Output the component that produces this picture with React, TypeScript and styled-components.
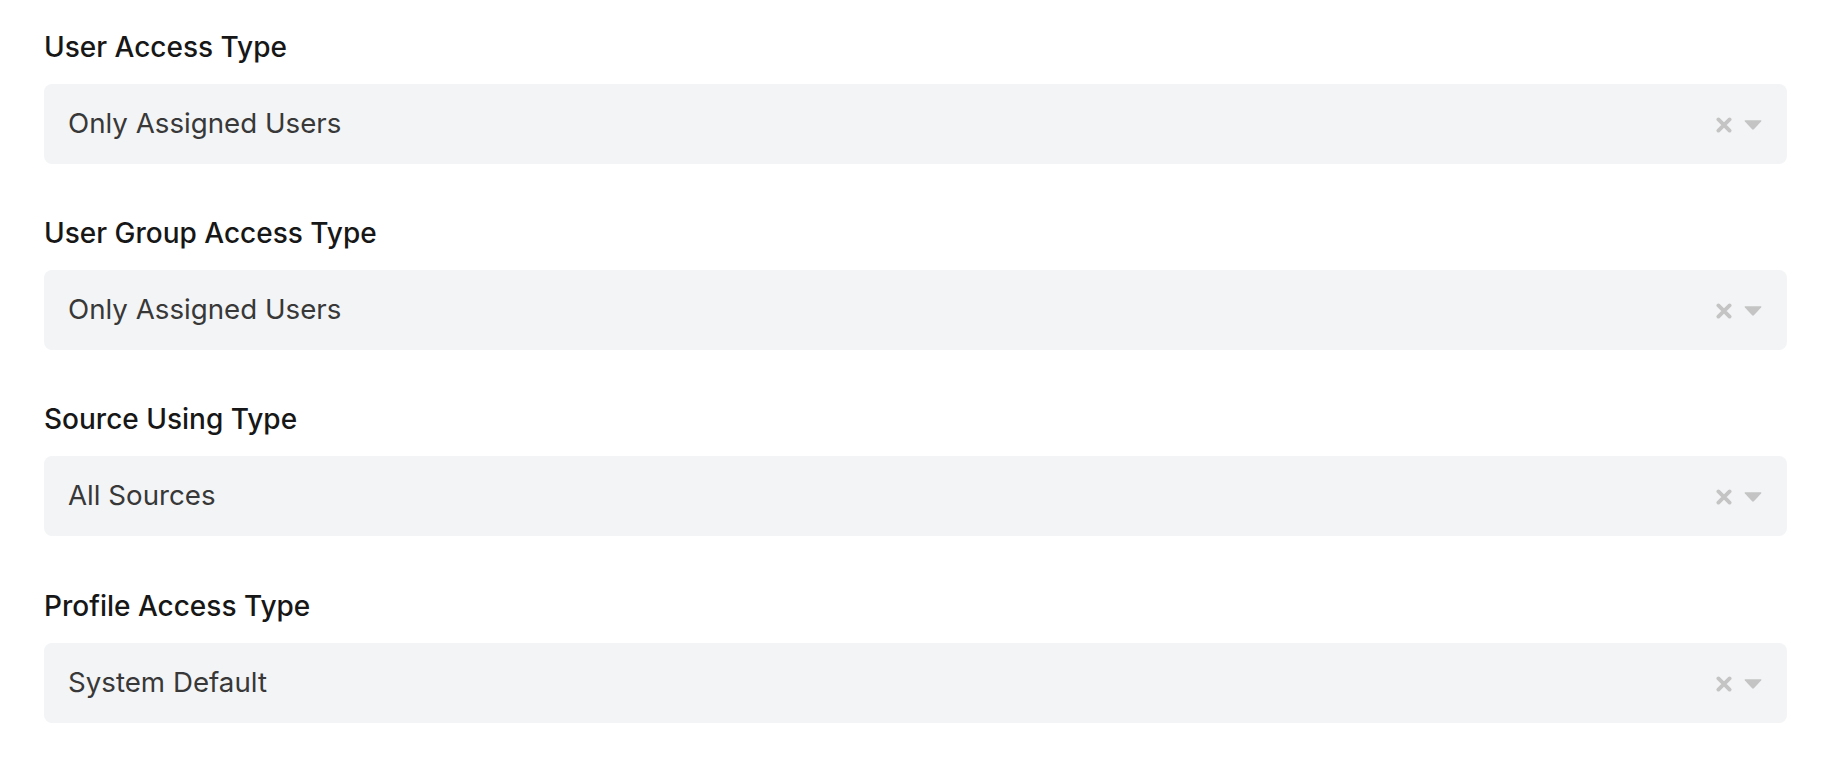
import styled, { createGlobalStyle } from "styled-components";

const GlobalStyle = createGlobalStyle`
  body {
    margin: 0;
    background: #ffffff;
    font-family: Inter, "Noto Sans", sans-serif;
  }
`;

const Page = styled.div`
  display: flex;
  flex-direction: column;
  gap: 53.2px;
  padding: 31px 39px 0 44px;
`;

const Field = styled.div`
  display: flex;
  flex-direction: column;
  gap: 21px;
`;

const Label = styled.div`
  height: 32px;
  line-height: 32px;
  font-size: 28px;
  font-weight: 500;
  color: #171717;
`;

const Select = styled.div`
  display: flex;
  align-items: center;
  justify-content: space-between;
  height: 80px;
  padding: 0 25px 0 24px;
  box-sizing: border-box;
  border-radius: 8px;
  background-color: #f3f4f6;
  &:hover {
    cursor: pointer;
  }
`;

const Value = styled.div`
  margin-bottom: 2px;
  font-size: 27.7px;
  color: #383838;
`;

const Icons = styled.div`
  display: flex;
  align-items: center;
  gap: 12px;
  margin-top: 2px;
`;

interface AccessField {
  label: string;
  value: string;
}

const fields: AccessField[] = [
  { label: "User Access Type", value: "Only Assigned Users" },
  { label: "User Group Access Type", value: "Only Assigned Users" },
  { label: "Source Using Type", value: "All Sources" },
  { label: "Profile Access Type", value: "System Default" },
];

const ClearIcon = () => (
  <svg width="16" height="16" viewBox="0 0 16 16">
    <path d="M2.4 2.4 L13.6 13.6 M13.6 2.4 L2.4 13.6" stroke="#c4c4c4" strokeWidth="3.8" strokeLinecap="round" />
  </svg>
);

const CaretIcon = () => (
  <svg width="18" height="10" viewBox="0 0 18 10">
    <path d="M1.2 0.3 H16.8 Q18 0.3 17.1 1.4 L9.9 9.3 Q9 10.2 8.1 9.3 L0.9 1.4 Q0 0.3 1.2 0.3 Z" fill="#c4c4c4" />
  </svg>
);

export default function App() {
  return (
    <>
      <GlobalStyle />
      <Page>
        {fields.map((field) => (
          <Field key={field.label}>
            <Label>{field.label}</Label>
            <Select>
              <Value>{field.value}</Value>
              <Icons>
                <ClearIcon />
                <CaretIcon />
              </Icons>
            </Select>
          </Field>
        ))}
      </Page>
    </>
  );
}
